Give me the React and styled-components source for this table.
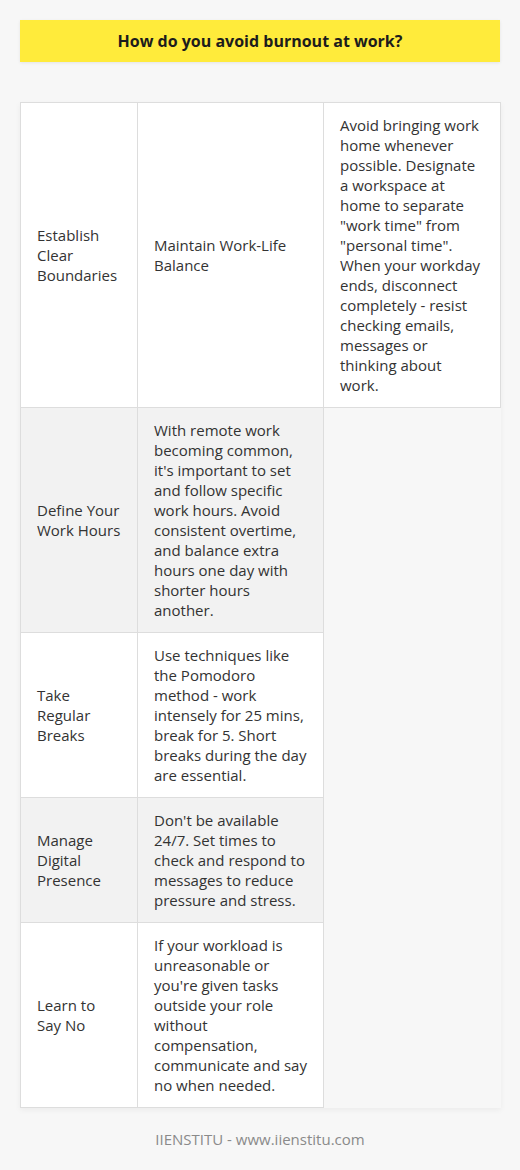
import React from "react";
import styled, { createGlobalStyle } from "styled-components";

const GlobalStyle = createGlobalStyle`
  body {
    margin: 0;
    background: #f7f7f7;
    font-family: "Open Sans", "Liberation Sans", sans-serif;
  }
`;

const Page = styled.div`
  padding: 20px 20px 0;
  min-height: 1170px;
  box-sizing: border-box;
`;

const Header = styled.div`
  height: 42px;
  background: #ffeb3b;
  display: flex;
  align-items: center;
  justify-content: center;
  box-shadow: 0 1px 3px rgba(0, 0, 0, 0.08);
`;

const Title = styled.h1`
  margin: 0;
  font-size: 16px;
  font-weight: 700;
  color: #1c1c1c;
`;

const Table = styled.table`
  margin-top: 40px;
  width: 480px;
  table-layout: fixed;
  border-collapse: collapse;
  box-shadow: 0 2px 6px rgba(0, 0, 0, 0.05);
`;

const Row = styled.tr`
  background: ${(p) => (p.$striped ? "#f2f2f2" : "#ffffff")};
`;

const Cell = styled.td`
  border: 1px solid #dddddd;
  padding: 12px 16px;
  font-size: 15px;
  line-height: 20px;
  color: #333333;
  vertical-align: middle;
`;

const Footer = styled.div`
  margin-top: 21px;
  text-align: center;
  font-size: 15px;
  line-height: 20px;
  color: #8a8a8a;
`;

const rows = [
  {
    title: "Define Your Work Hours",
    text: "With remote work becoming common, it's important to set and follow specific work hours. Avoid consistent overtime, and balance extra hours one day with shorter hours another.",
  },
  {
    title: "Take Regular Breaks",
    text: "Use techniques like the Pomodoro method - work intensely for 25 mins, break for 5. Short breaks during the day are essential.",
  },
  {
    title: "Manage Digital Presence",
    text: "Don't be available 24/7. Set times to check and respond to messages to reduce pressure and stress.",
  },
  {
    title: "Learn to Say No",
    text: "If your workload is unreasonable or you're given tasks outside your role without compensation, communicate and say no when needed.",
  },
];

const App = () => {
  return (
    <Page>
      <GlobalStyle />
      <Header>
        <Title>How do you avoid burnout at work?</Title>
      </Header>
      <Table>
        <colgroup>
          <col style={{ width: 117 }} />
          <col style={{ width: 186 }} />
          <col style={{ width: 177 }} />
        </colgroup>
        <tbody>
          <Row>
            <Cell>Establish Clear Boundaries</Cell>
            <Cell>Maintain Work-Life Balance</Cell>
            <Cell>
              Avoid bringing work home whenever possible. Designate a workspace
              at home to separate "work time" from "personal time". When your
              workday ends, disconnect completely - resist checking emails,
              messages or thinking about work.
            </Cell>
          </Row>
          {rows.map((r, i) => (
            <Row key={r.title} $striped={i % 2 === 0}>
              <Cell>{r.title}</Cell>
              <Cell>{r.text}</Cell>
            </Row>
          ))}
        </tbody>
      </Table>
      <Footer>IIENSTITU - www.iienstitu.com</Footer>
    </Page>
  );
};

export default App;
